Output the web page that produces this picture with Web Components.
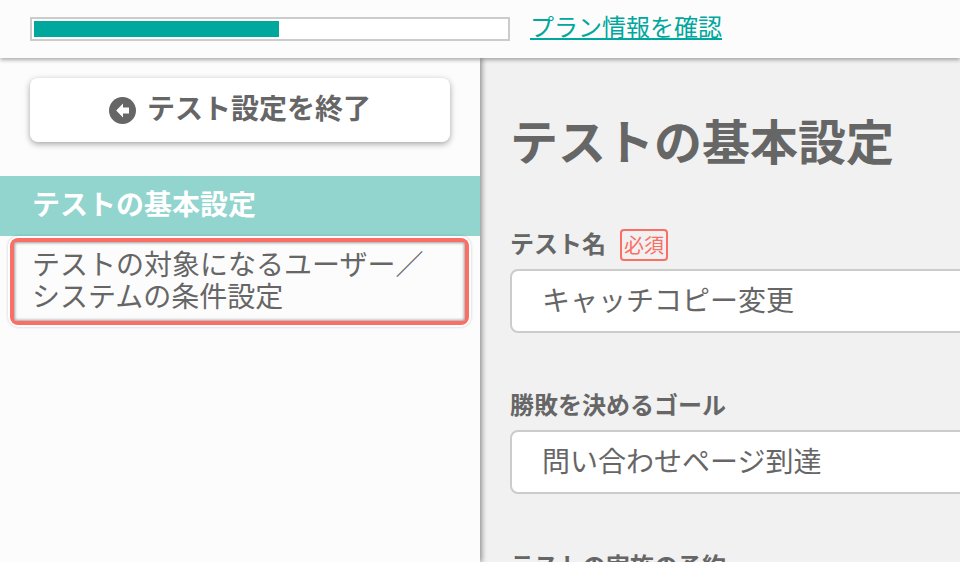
<!DOCTYPE html>
<html lang="ja">
<head>
<meta charset="utf-8">
<title>テストの基本設定</title>
<style>
  html, body { margin: 0; height: 100%; overflow: hidden; }
  body {
    font-family: "Noto Sans CJK JP", "Noto Sans", sans-serif;
    color: #666;
    background: #f1f1f1;
  }
  #page { display: flex; flex-direction: column; height: 562px; overflow: hidden; }
  #body { display: flex; flex: 1; min-height: 0; }
</style>
</head>
<body>
<div id="page">
  <plan-header percent="51.9">プラン情報を確認</plan-header>
  <div id="body">
    <side-nav>
      <exit-button>テスト設定を終了</exit-button>
      <nav-item active>テストの基本設定</nav-item>
      <nav-item focused>テストの対象になるユーザー／<br>システムの条件設定</nav-item>
    </side-nav>
    <main-panel heading="テストの基本設定">
      <form-field label="テスト名" required value="キャッチコピー変更"></form-field>
      <form-field label="勝敗を決めるゴール" value="問い合わせページ到達"></form-field>
      <form-field label="テストの実施の予約"></form-field>
    </main-panel>
  </div>
</div>

<script>
// ヘッダー（プログレスバーとリンク）
class PlanHeader extends HTMLElement {
  constructor() {
    super();
    this.attachShadow({ mode: 'open' });
    this.shadowRoot.innerHTML = `
      <style>
        :host {
          display: flex;
          align-items: center;
          gap: 20px;
          flex: none;
          height: 58px;
          box-sizing: border-box;
          padding: 0 0 0 30px;
          background: #fcfcfc;
          box-shadow: 0 2px 4px rgba(0,0,0,.32);
          position: relative;
          z-index: 2;
        }
        .bar {
          width: 480px;
          height: 24px;
          box-sizing: border-box;
          border: 2px solid #ccc;
          background: #fff;
          padding: 2px;
        }
        .fill { height: 100%; background: #00a79d; }
        a {
          font-size: 24px;
          line-height: 32px;
          color: #00a79d;
          text-decoration: underline;
          text-decoration-thickness: 2px;
          text-underline-offset: 2px;
          margin-bottom: 6px;
        }
      </style>
      <div class="bar"><div class="fill"></div></div>
      <a href="#"><slot></slot></a>
    `;
  }

  connectedCallback() {
    this.shadowRoot.querySelector('.fill').style.width = this.getAttribute('percent') + '%';
  }
}

// 左カラム
class SideNav extends HTMLElement {
  constructor() {
    super();
    this.attachShadow({ mode: 'open' });
    this.shadowRoot.innerHTML = `
      <style>
        :host {
          display: flex;
          flex-direction: column;
          flex: none;
          width: 480px;
          box-sizing: border-box;
          padding-top: 20px;
          background: #fcfcfc;
          box-shadow: 2px 0 5px rgba(0,0,0,.4);
          position: relative;
          z-index: 1;
        }
      </style>
      <slot></slot>
    `;
  }
}

class ExitButton extends HTMLElement {
  constructor() {
    super();
    this.attachShadow({ mode: 'open' });
    this.shadowRoot.innerHTML = `
      <style>
        :host {
          display: flex;
          align-items: center;
          justify-content: center;
          gap: 11px;
          width: 420px;
          height: 64px;
          margin: 0 30px 34px;
          background: #fff;
          border-radius: 8px;
          box-shadow: 0 2px 6px rgba(0,0,0,.35);
          font-size: 28px;
          font-weight: 700;
          color: #666;
        }
        svg { width: 27px; height: 27px; flex: none; margin-top: 1px; }
        .t { display: block; line-height: 40px; margin-bottom: 6px; }
      </style>
      <svg viewBox="0 0 27 27"><circle cx="13.5" cy="13.5" r="13.5" fill="#666"/><path d="M14 6.5 7.2 13.5 14 20.5V16.4H20V10.6H14Z" fill="#fff"/></svg>
      <span class="t"><slot></slot></span>
    `;
  }
}

class NavItem extends HTMLElement {
  constructor() {
    super();
    this.attachShadow({ mode: 'open' });
    this.shadowRoot.innerHTML = `
      <style>
        :host {
          display: block;
          font-size: 28px;
          line-height: 32px;
          color: #666;
        }
        :host([active]) {
          height: 60px;
          box-sizing: border-box;
          padding: 11px 32px 0;
          background: #92d4ce;
          color: #fff;
          font-weight: 700;
          margin-bottom: 2px;
        }
        :host([focused]) {
          margin: 0 11px 0 10px;
          padding: 4px;
          border-radius: 8px;
          background: #fa6e66;
          box-shadow: 0 0 0 2px #fff, 0 0 3px 2px rgba(0,0,0,.2);
        }
        .in { display: block; }
        :host([focused]) .in {
          height: 79px;
          box-sizing: border-box;
          padding: 5px 0 0 18px;
          border-radius: 2px;
          background: #fcfcfc;
          box-shadow: inset 0 0 3px 1px rgba(0,0,0,.38);
        }
      </style>
      <span class="in"><slot></slot></span>
    `;
  }
}

// 右カラム
class MainPanel extends HTMLElement {
  constructor() {
    super();
    this.attachShadow({ mode: 'open' });
    this.shadowRoot.innerHTML = `
      <style>
        :host {
          display: block;
          flex: 1;
          min-width: 0;
          box-sizing: border-box;
          padding: 46px 0 0 30px;
          background: #f1f1f1;
          overflow: hidden;
        }
        h1 {
          margin: 0 0 55px;
          font-size: 48px;
          line-height: 70px;
          font-weight: 700;
          color: #666;
        }
      </style>
      <h1></h1>
      <slot></slot>
    `;
  }

  connectedCallback() {
    this.shadowRoot.querySelector('h1').textContent = this.getAttribute('heading');
  }
}

class FormField extends HTMLElement {
  constructor() {
    super();
    this.attachShadow({ mode: 'open' });
    this.shadowRoot.innerHTML = `
      <style>
        :host { display: block; margin-bottom: 57px; }
        .label {
          display: flex;
          align-items: flex-start;
          gap: 14px;
          height: 32px;
          margin-bottom: 8px;
          font-size: 24px;
          line-height: 28px;
          font-weight: 700;
          color: #666;
        }
        .req {
          display: block;
          box-sizing: border-box;
          width: 48px;
          height: 32px;
          border: 2px solid #fa6e66;
          border-radius: 4px;
          color: #fa6e66;
          font-size: 20px;
          font-weight: 400;
          line-height: 28px;
          text-align: center;
        }
        .box {
          box-sizing: border-box;
          width: 520px;
          height: 64px;
          padding: 0 30px;
          border: 2px solid #ccc;
          border-radius: 8px;
          background: #fff;
          font-size: 28px;
          line-height: 57px;
          color: #666;
        }
      </style>
      <div class="label"><span class="t"></span></div>
      <div class="box"></div>
    `;
  }

  connectedCallback() {
    this.shadowRoot.querySelector('.t').textContent = this.getAttribute('label');
    this.shadowRoot.querySelector('.box').textContent = this.getAttribute('value') || '';
    if (this.hasAttribute('required')) {
      const req = document.createElement('span');
      req.className = 'req';
      req.textContent = '必須';
      this.shadowRoot.querySelector('.label').appendChild(req);
    }
  }
}

customElements.define('plan-header', PlanHeader);
customElements.define('side-nav', SideNav);
customElements.define('exit-button', ExitButton);
customElements.define('nav-item', NavItem);
customElements.define('main-panel', MainPanel);
customElements.define('form-field', FormField);
</script>
</body>
</html>
